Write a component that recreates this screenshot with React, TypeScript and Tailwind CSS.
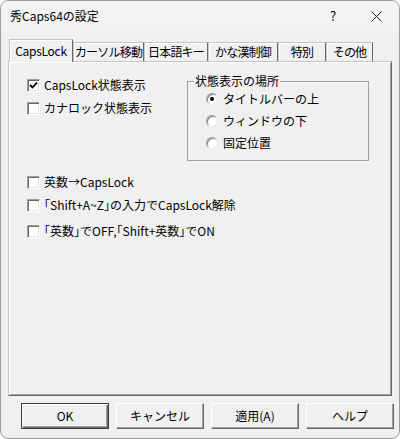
import React from "react";

const FONT = "font-['Noto_Sans_CJK_JP','Noto_Sans',sans-serif]";

function Check({ checked }: { checked?: boolean }) {
  return (
    <div className="relative w-[13px] h-[13px] shrink-0 bg-white border border-t-[#a0a0a0] border-l-[#a0a0a0] border-r-white border-b-white shadow-[inset_1px_1px_0_#696969,inset_-1px_-1px_0_#e3e3e3] flex items-center justify-center">
      {checked && (
        <svg width="9" height="9" viewBox="0 0 9 9">
          <path d="M1 4 L3.5 6.5 L8 1.5" stroke="#000" strokeWidth="1.8" fill="none" />
        </svg>
      )}
    </div>
  );
}

function CheckRow({ label, checked }: { label: string; checked?: boolean }) {
  return (
    <div className="flex items-center h-[16px] gap-[4px]">
      <Check checked={checked} />
      <span className="text-[12px] leading-[16px] text-black whitespace-nowrap">{label}</span>
    </div>
  );
}

function Radio({ label, checked }: { label: string; checked?: boolean }) {
  return (
    <div className="flex items-center h-[16px] gap-[5px]">
      <div className="w-[12px] h-[12px] shrink-0 rounded-full bg-white border border-t-[#a0a0a0] border-l-[#a0a0a0] border-r-[#e8e8e8] border-b-[#e8e8e8] shadow-[inset_1px_1px_0_#8a8a8a] flex items-center justify-center">
        {checked && <div className="w-[4px] h-[4px] rounded-full bg-black" />}
      </div>
      <span className="text-[12px] leading-[16px] text-black whitespace-nowrap">{label}</span>
    </div>
  );
}

function Tab({ label, w, selected }: { label: string; w: string; selected?: boolean }) {
  if (selected) {
    return (
      <div
        className={`${w} h-[23px] -mb-px relative z-10 bg-[#f0f0f0] border-l border-t border-r border-l-[#c4c4c4] border-t-[#c4c4c4] border-r-[#696969] shadow-[inset_1px_1px_0_#ffffff] flex items-start justify-center pt-[3px] text-[12px] tracking-[-0.3px] leading-[16px] text-black whitespace-nowrap`}
      >
        {label}
      </div>
    );
  }
  return (
    <div
      className={`${w} h-[19px] bg-[#f0f0f0] border-l border-t border-r border-l-[#c4c4c4] border-t-[#c4c4c4] border-r-[#696969] shadow-[inset_1px_1px_0_#ffffff] flex items-start justify-center pt-[1px] text-[12px] tracking-[-0.8px] leading-[16px] text-black whitespace-nowrap overflow-hidden`}
    >
      {label}
    </div>
  );
}

function Btn({ label, def }: { label: string; def?: boolean }) {
  return (
    <div
      className={`w-[88px] h-[26px] flex items-center justify-center text-[12px] text-black bg-[#f0f0f0] ${
        def
          ? "border border-[#3c3c3c] shadow-[inset_1px_1px_0_#ffffff,inset_-1px_-1px_0_#696969,inset_-2px_-2px_0_#a0a0a0]"
          : "border border-t-white border-l-white border-r-[#696969] border-b-[#696969] shadow-[inset_-1px_-1px_0_#a0a0a0]"
      }`}
    >
      {label}
    </div>
  );
}

export default function App() {
  return (
    <div className={`${FONT} w-[400px] h-[439px] bg-[#f0f0f0] border border-[#9c9c9c] rounded-[8px] overflow-hidden flex flex-col`}>
      {/* Title bar */}
      <div className="h-[30px] shrink-0 bg-[#f3f3f3] flex items-center pl-[9px] relative">
        <span className="text-[12px] text-black leading-[16px]">秀Caps64の設定</span>
        <div className="ml-auto flex items-center">
          <span className="w-[20px] text-center text-[13px] text-black mr-[28px]">?</span>
          <svg width="11" height="11" viewBox="0 0 11 11" className="mr-[17px]">
            <path d="M0.5 0.5 L10.5 10.5 M10.5 0.5 L0.5 10.5" stroke="#1a1a1a" strokeWidth="1" />
          </svg>
        </div>
      </div>

      {/* Tabs + panel */}
      <div className="px-[7px] pt-[8px] flex flex-col">
        <div className="flex items-end h-[22px] pl-[1px]">
          <Tab label="CapsLock" w="w-[64px]" selected />
          <Tab label="カーソル移動" w="w-[71px]" />
          <Tab label="日本語キー" w="w-[64px]" />
          <Tab label="かな漢制御" w="w-[70px]" />
          <Tab label="特別" w="w-[48px]" />
          <Tab label="その他" w="w-[47px]" />
        </div>
        <div className="h-[335px] border border-t-[#c4c4c4] border-l-[#c4c4c4] border-r-[#696969] border-b-[#696969] shadow-[inset_1px_1px_0_#ffffff,inset_-1px_-1px_0_#a0a0a0] pl-[18px] pt-[12px]">
          <div className="flex items-start">
            <div className="w-[160px] pt-[3px] flex flex-col gap-[7px]">
              <CheckRow label="CapsLock状態表示" checked />
              <CheckRow label="カナロック状態表示" />
            </div>
            <fieldset className="w-[182px] h-[87px] border border-[#a0a0a0]">
              <legend className="text-[12px] leading-[14px] ml-[6px] px-[1px] text-black">状態表示の場所</legend>
              <div className="flex flex-col gap-[6px] pt-[3px] pl-[18px]">
                <Radio label="タイトルバーの上" checked />
                <Radio label="ウィンドウの下" />
                <Radio label="固定位置" />
              </div>
            </fieldset>
          </div>
          <div className="flex flex-col mt-[13px]">
            <CheckRow label="英数→CapsLock" />
            <div className="h-[7px]" />
            <CheckRow label="｢Shift+A~Z｣の入力でCapsLock解除" />
            <div className="h-[10px]" />
            <CheckRow label="｢英数｣でOFF,｢Shift+英数｣でON" />
          </div>
        </div>
      </div>

      {/* Buttons */}
      <div className="flex gap-[7px] pl-[20px] mt-[7px]">
        <Btn label="OK" def />
        <Btn label="キャンセル" />
        <Btn label="適用(A)" />
        <Btn label="ヘルプ" />
      </div>
    </div>
  );
}
